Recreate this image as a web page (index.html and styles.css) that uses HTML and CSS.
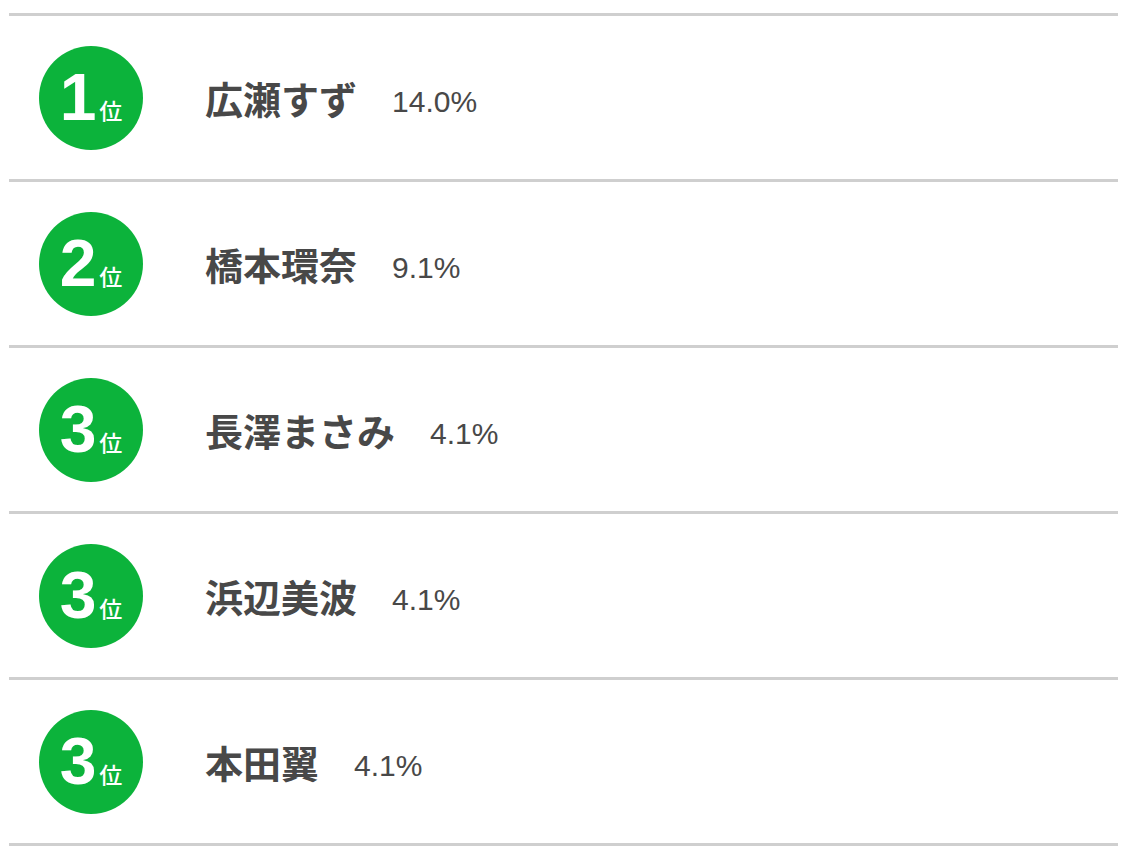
FILE: index.html
```html
<!DOCTYPE html>
<html lang="ja">
<head>
<meta charset="utf-8">
<link rel="stylesheet" href="styles.css">
</head>
<body>
<ul class="ranking">
  <li class="row">
    <div class="badge"><span class="num">1</span><span class="unit">位</span></div>
    <span class="name">広瀬すず</span><span class="pct">14.0%</span>
  </li>
  <li class="row">
    <div class="badge"><span class="num">2</span><span class="unit">位</span></div>
    <span class="name">橋本環奈</span><span class="pct">9.1%</span>
  </li>
  <li class="row">
    <div class="badge"><span class="num">3</span><span class="unit">位</span></div>
    <span class="name">長澤まさみ</span><span class="pct">4.1%</span>
  </li>
  <li class="row">
    <div class="badge"><span class="num">3</span><span class="unit">位</span></div>
    <span class="name">浜辺美波</span><span class="pct">4.1%</span>
  </li>
  <li class="row">
    <div class="badge"><span class="num">3</span><span class="unit">位</span></div>
    <span class="name">本田翼</span><span class="pct">4.1%</span>
  </li>
</ul>
</body>
</html>
```

FILE: styles.css
```css
html, body {
  margin: 0;
  padding: 0;
  background: #fff;
}
body {
  padding: 13px 10px 0 9px;
  font-family: "Noto Sans CJK JP", "Noto Sans", sans-serif;
  color: #4a4a4a;
}
.ranking {
  list-style: none;
  margin: 0;
  padding: 0;
  border-top: 3px solid #cfcfcf;
}
.row {
  height: 163px;
  border-bottom: 3px solid #cfcfcf;
  display: flex;
  align-items: center;
  padding-left: 30px;
}
.badge {
  width: 104px;
  height: 104px;
  border-radius: 50%;
  background: #0cb33b;
  color: #fff;
  display: flex;
  align-items: baseline;
  justify-content: center;
  flex-shrink: 0;
}
.num {
  font-family: "Liberation Sans", Arial, sans-serif;
  font-weight: 700;
  font-size: 66px;
  line-height: 102px;
  margin-right: 3px;
}
.unit {
  font-family: "Noto Sans CJK JP", sans-serif;
  font-weight: 500;
  font-size: 23px;
  line-height: 1;
}
.name {
  margin-left: 62px;
  font-weight: 700;
  font-size: 38px;
  color: #484848;
  line-height: 1;
}
.pct {
  margin-left: 35px;
  font-family: "Liberation Sans", Arial, sans-serif;
  font-size: 30px;
  color: #484848;
  line-height: 1;
  padding-top: 9px;
}
```
